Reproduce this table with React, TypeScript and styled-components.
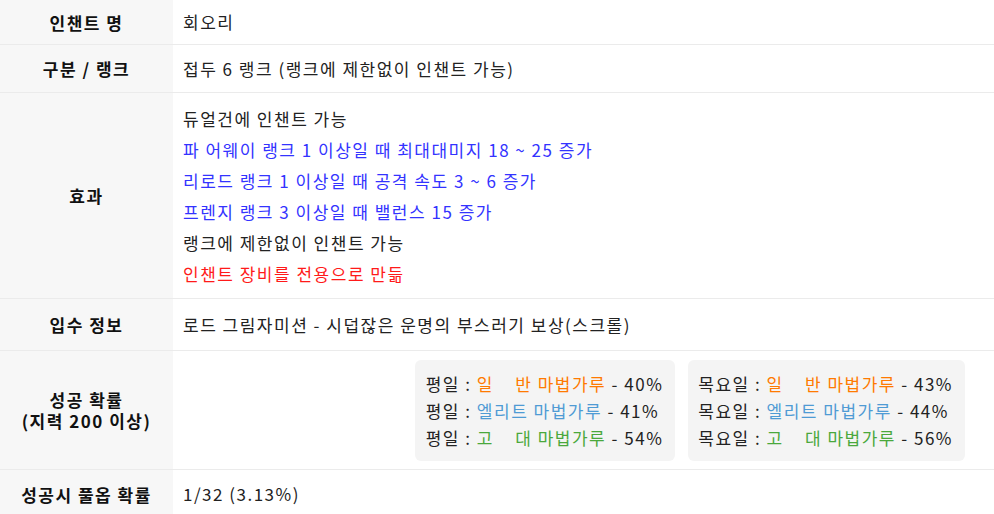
import React from "react";
import styled, { createGlobalStyle } from "styled-components";

const Global = createGlobalStyle`
  html, body { margin: 0; padding: 0; background: #fff; }
  body {
    font-family: "Noto Sans CJK KR", "Noto Sans", sans-serif;
    color: #222;
    font-size: 17px;
    letter-spacing: 1.5px;
  }
`;

const Table = styled.div`
  width: 994px;
  display: flex;
  flex-direction: column;
`;

const Row = styled.div<{ $h: number }>`
  display: grid;
  grid-template-columns: 173px 1fr;
  height: ${(p) => p.$h}px;
  border-bottom: 1px solid #ebebeb;
  &:last-child { border-bottom: none; }
`;

const Head = styled.div`
  background: #f7f7f7;
  display: flex;
  flex-direction: column;
  align-items: center;
  justify-content: center;
  text-align: center;
  font-weight: 700;
  line-height: 21px;
  color: #111;
`;

const Cell = styled.div`
  display: flex;
  align-items: center;
  padding: 0 10px;
  line-height: 24px;
`;

const Lines = styled.div`
  display: flex;
  flex-direction: column;
`;

const Line = styled.div<{ $c?: string }>`
  line-height: 31px;
  color: ${(p) => p.$c || "#222"};
`;

const BoxRow = styled(Cell)`
  justify-content: flex-end;
  padding-right: 29px;
  gap: 13px;
`;

const Box = styled.div<{ $pl: number; $pr: number }>`
  background: #f4f4f4;
  border-radius: 6px;
  padding: 10px ${(p) => p.$pr}px 10px ${(p) => p.$pl}px;
  line-height: 27px;
  white-space: nowrap;
`;

const Tag = styled.span<{ $c: string }>`
  color: ${(p) => p.$c};
`;

const ORANGE = "#ff7a00";
const SKY = "#4f9bd4";
const GREEN = "#4aa83c";
const BLUE = "#3333ff";
const RED = "#ff1a1a";

const tiers = [
  { name: "일\u00a0\u00a0\u00a0\u00a0반 마법가루", c: ORANGE },
  { name: "엘리트 마법가루", c: SKY },
  { name: "고\u00a0\u00a0\u00a0\u00a0대 마법가루", c: GREEN },
];

const Rates = ({
  day,
  rates,
  pl,
  pr,
}: {
  day: string;
  rates: string[];
  pl: number;
  pr: number;
}) => (
  <Box $pl={pl} $pr={pr}>
    {tiers.map((t, i) => (
      <div key={i}>
        {day} : <Tag $c={t.c}>{t.name}</Tag> - {rates[i]}
      </div>
    ))}
  </Box>
);

export default function App() {
  return (
    <>
      <Global />
      <Table>
        <Row $h={44}>
          <Head>인챈트 명</Head>
          <Cell>회오리</Cell>
        </Row>
        <Row $h={47}>
          <Head>구분 / 랭크</Head>
          <Cell>접두 6 랭크 (랭크에 제한없이 인챈트 가능)</Cell>
        </Row>
        <Row $h={205}>
          <Head>효과</Head>
          <Cell>
            <Lines>
              <Line>듀얼건에 인챈트 가능</Line>
              <Line $c={BLUE}>파 어웨이 랭크 1 이상일 때 최대대미지 18 ~ 25 증가</Line>
              <Line $c={BLUE}>리로드 랭크 1 이상일 때 공격 속도 3 ~ 6 증가</Line>
              <Line $c={BLUE}>프렌지 랭크 3 이상일 때 밸런스 15 증가</Line>
              <Line>랭크에 제한없이 인챈트 가능</Line>
              <Line $c={RED}>인챈트 장비를 전용으로 만듦</Line>
            </Lines>
          </Cell>
        </Row>
        <Row $h={51}>
          <Head>입수 정보</Head>
          <Cell>로드 그림자미션 - 시덥잖은 운명의 부스러기 보상(스크롤)</Cell>
        </Row>
        <Row $h={118}>
          <Head>
            <div>성공 확률</div>
            <div>(지력 200 이상)</div>
          </Head>
          <BoxRow>
            <Rates day="평일" rates={["40%", "41%", "54%"]} pl={11} pr={12} />
            <Rates day="목요일" rates={["43%", "44%", "56%"]} pl={10} pr={12} />
          </BoxRow>
        </Row>
        <Row $h={48}>
          <Head>성공시 풀옵 확률</Head>
          <Cell>1/32 (3.13%)</Cell>
        </Row>
      </Table>
    </>
  );
}
